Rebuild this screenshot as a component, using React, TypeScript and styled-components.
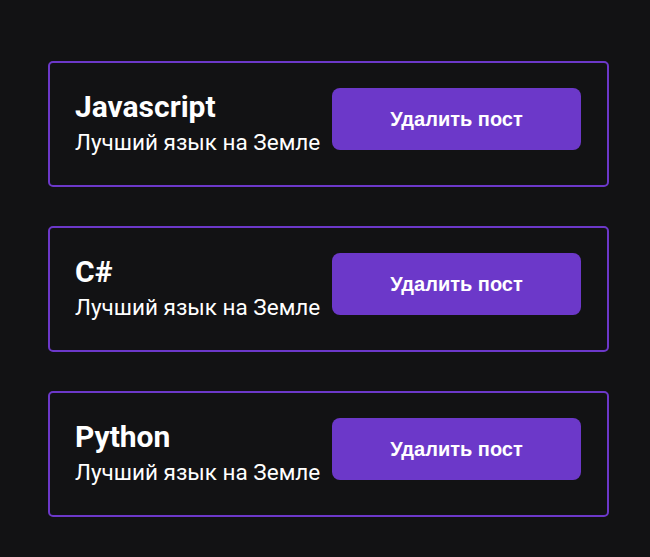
import React from "react";
import styled, { createGlobalStyle } from "styled-components";

const GlobalStyle = createGlobalStyle`
  html, body {
    margin: 0;
    padding: 0;
    background: #121214;
  }
  body {
    font-family: Roboto, "Noto Sans", sans-serif;
    color: #ffffff;
  }
`;

const Page = styled.div`
  display: flex;
  flex-direction: column;
  gap: 39px;
  width: 561px;
  padding: 61px 0 40px 48px;
`;

const Card = styled.div`
  display: flex;
  justify-content: space-between;
  align-items: flex-start;
  height: 126px;
  box-sizing: border-box;
  padding: 25px 26px 25px 25px;
  border: 2px solid #6c38c9;
  border-radius: 5px;
`;

const Info = styled.div`
  display: flex;
  flex-direction: column;
  padding-top: 1px;
`;

const Title = styled.h2`
  margin: 0 0 5px;
  font-size: 30px;
  font-weight: 700;
  line-height: 35px;
`;

const Body = styled.p`
  margin: 0;
  font-size: 22.5px;
  line-height: 26px;
`;

const DeleteButton = styled.button`
  width: 249px;
  height: 62px;
  border: none;
  border-radius: 8px;
  background: #6c38c9;
  color: #ffffff;
  font-family: "Liberation Sans", Arial, sans-serif;
  font-size: 20px;
  font-weight: 700;
  cursor: pointer;
`;

interface Post {
  id: number;
  title: string;
  body: string;
}

const posts: Post[] = [
  { id: 1, title: "Javascript", body: "Лучший язык на Земле" },
  { id: 2, title: "C#", body: "Лучший язык на Земле" },
  { id: 3, title: "Python", body: "Лучший язык на Земле" },
];

function PostItem({ post }: { post: Post }) {
  return (
    <Card>
      <Info>
        <Title>{post.title}</Title>
        <Body>{post.body}</Body>
      </Info>
      <DeleteButton>Удалить пост</DeleteButton>
    </Card>
  );
}

export default function App() {
  return (
    <>
      <GlobalStyle />
      <Page>
        {posts.map((p) => (
          <PostItem key={p.id} post={p} />
        ))}
      </Page>
    </>
  );
}
